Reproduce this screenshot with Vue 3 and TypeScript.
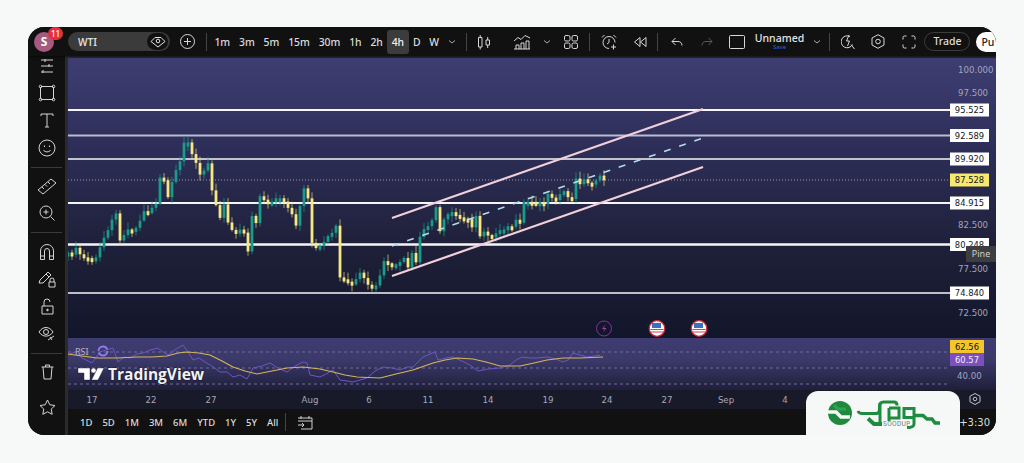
<script setup lang="ts">
import { computed } from 'vue'

type P = [number, number]

const intervals = ['1m', '3m', '5m', '15m', '30m', '1h', '2h', '4h', 'D', 'W']
const ranges = ['1D', '5D', '1M', '3M', '6M', 'YTD', '1Y', '5Y', 'All']

const closes: P[] = [
  [68, 255], [76, 250], [84, 258], [96, 259], [103, 240], [112, 218], [116, 215], [120, 238], [127, 230], [137, 228],
  [143, 212], [148, 212], [156, 203], [160, 178], [164, 182], [168, 198], [172, 182], [180, 163], [184, 143], [188, 140],
  [192, 153], [200, 175], [204, 172], [208, 163], [212, 188], [220, 218], [224, 203], [228, 222], [237, 235], [243, 227],
  [248, 250], [252, 217], [256, 223], [260, 198], [270, 207], [277, 195], [290, 208], [296, 227], [300, 207], [304, 190],
  [308, 200], [312, 245], [320, 248], [325, 243], [330, 235], [336, 227], [340, 278], [353, 285], [360, 275], [373, 290],
  [380, 277], [385, 260], [395, 267], [404, 260], [408, 268], [412, 253], [416, 263], [420, 237], [424, 227], [432, 222],
  [436, 207], [440, 230], [445, 215], [452, 210], [458, 220], [467, 218], [471, 227], [476, 218], [480, 238], [485, 230],
  [492, 237], [502, 227], [510, 228], [518, 220], [520, 225], [524, 202], [533, 202], [543, 203], [548, 195], [557, 198],
  [565, 193], [572, 200], [576, 180], [580, 182], [585, 180], [590, 185], [598, 177], [604, 180],
]

function closeAt(x: number): number {
  for (let i = 1; i < closes.length; i++) {
    const [x0, y0] = closes[i - 1]
    const [x1, y1] = closes[i]
    if (x <= x1) return y0 + ((y1 - y0) * (x - x0)) / (x1 - x0)
  }
  return closes[closes.length - 1][1]
}

function noise(i: number): number {
  const v = Math.sin(i * 12.9898) * 43758.5453
  return v - Math.floor(v)
}

const candles = computed(() => {
  const out: { x: number; top: number; h: number; wt: number; wb: number; up: boolean }[] = []
  let prev = closeAt(68)
  for (let x = 68, i = 0; x <= 604; x += 4, i++) {
    const c = closeAt(x) + (noise(i) - 0.5) * 5
    const top = Math.min(prev, c)
    const h = Math.max(Math.abs(prev - c), 4)
    out.push({ x, top, h, wt: top - 1 - noise(i + 300) * 6, wb: top + h + 1 + noise(i + 600) * 5, up: c < prev })
    prev = c
  }
  return out
})

const levels = [
  { y: 110, label: '95.525', w: 2, c: '#f6f6fa' },
  { y: 135.5, label: '92.589', w: 2, c: '#bcbccf' },
  { y: 159, label: '89.920', w: 1.5, c: '#f6f6fa' },
  { y: 203, label: '84.915', w: 2, c: '#f6f6fa' },
  { y: 244.5, label: '80.248', w: 2.4, c: '#f6f6fa' },
  { y: 293, label: '74.840', w: 1.5, c: '#f6f6fa' },
]

const ticks = [
  { y: 70, t: '100.000' }, { y: 93, t: '97.500' }, { y: 225, t: '82.500' },
  { y: 269, t: '77.500' }, { y: 313, t: '72.500' },
]

const dates = [
  { x: 92, t: '17' }, { x: 151, t: '22' }, { x: 211, t: '27' }, { x: 310, t: 'Aug' }, { x: 369, t: '6' },
  { x: 428, t: '11' }, { x: 488, t: '14' }, { x: 548, t: '19' }, { x: 607, t: '24' }, { x: 667, t: '27' },
  { x: 726, t: 'Sep' }, { x: 785, t: '4' },
]

const rsiPurple = '68,355 75,352 82,358 92,363 100,352 106,350 113,348 118,362 124,357 130,358 137,354 143,353 150,350 158,348 163,352 168,355 176,349 183,345 188,352 193,360 199,358 205,362 212,366 220,372 227,372 233,377 240,375 247,379 253,368 262,366 270,363 278,368 287,372 295,366 303,362 307,363 310,375 320,377 326,374 333,370 340,380 347,381 353,382 360,380 367,378 375,371 383,367 392,368 400,370 407,367 413,367 423,357 430,354 435,352 438,360 446,358 453,357 462,361 470,365 478,371 488,369 500,368 510,365 516,360 522,357 530,358 537,358 547,357 556,359 563,362 568,360 573,353 580,355 587,357 594,356 600,355'
const rsiYellow = '68,354 82,356 97,358 117,358 137,357 152,357 167,356 178,353 187,352 199,353 210,355 222,361 233,367 245,371 257,374 272,371 287,368 303,367 320,369 333,372 345,375 357,377 380,378 396,374 413,370 433,363 445,360 457,358 473,359 486,362 500,366 520,366 534,363 547,360 563,358 580,358 603,357'
</script>

<template>
  <div class="page">
    <div class="frame">
      <header class="topbar">
        <div class="avatar">S<span class="badge">11</span></div>
        <div class="symbol">
          <span class="symbol-name">WTI</span>
          <span class="symbol-eye">
            <svg width="16" height="12" viewBox="0 0 16 12" fill="none" stroke="#e4e4e4" stroke-width="1"><path d="M1 5.500 5 1.500h6l4 4-7 5.500z" /><circle cx="8" cy="5" r="1.800" /></svg>
          </span>
        </div>
        <svg class="ic ml10" width="15" height="15" viewBox="0 0 15 15" fill="none" stroke="#d8d8d8"><circle cx="7.500" cy="7.500" r="7" /><path d="M7.500 4v7M4 7.500h7" /></svg>
        <span class="sep ml11"></span>
        <div class="intervals">
          <span v-for="i in intervals" :key="i" class="interval" :class="{ active: i === '4h' }">{{ i }}</span>
        </div>
        <svg class="ic ml4" width="10" height="6" viewBox="0 0 10 6" fill="none" stroke="#aaa"><path d="m2 1.500 3 2.500 3-2.500" /></svg>
        <span class="sep ml9"></span>
        <svg class="ic ml10" width="14" height="16" viewBox="0 0 14 16" fill="none" stroke="#d8d8d8"><path d="M1.500 3.500h3.500v9.500h-3.500zM3.200 1v2.500M3.200 13v2.500M9 6h3.500v5h-3.500zM10.700 3v3M10.700 11v3" /></svg>
        <svg class="ic ml22" width="18" height="17" viewBox="0 0 18 17" fill="none" stroke="#d8d8d8"><path d="M1 8 5 4.500l3 2 4-4 5 2.500M1 16h16M3 16v-4h3v4M8 16v-6h3v6M13 16v-8h3v8" /></svg>
        <svg class="ic ml12" width="8" height="6" viewBox="0 0 8 6" fill="none" stroke="#aaa"><path d="m1 1.500 3 2.500 3-2.500" /></svg>
        <svg class="ic ml13" width="14" height="14" viewBox="0 0 14 14" fill="none" stroke="#d8d8d8"><rect x=".5" y=".5" width="5.500" height="5.500" rx="1.500" /><rect x="8" y=".5" width="5.500" height="5.500" rx="1.500" /><rect x=".5" y="8" width="5.500" height="5.500" rx="1.500" /><rect x="8" y="8" width="5.500" height="5.500" rx="1.500" /></svg>
        <span class="sep ml11"></span>
        <svg class="ic ml11" width="16" height="16" viewBox="0 0 16 16" fill="none" stroke="#d8d8d8"><path d="M8 14.500a6 6 0 1 1 6-6M8 5v3.500l-2 1.500M1 3.500 3.500 1M15 3.500 12.500 1M12.500 10.500v5M10 13h5" /></svg>
        <svg class="ic ml16" width="14" height="12" viewBox="0 0 14 12" fill="none" stroke="#d8d8d8"><path d="M7 1.500 1.500 6 7 10.500zM13 1.500 7.500 6l5.500 4.500z" /></svg>
        <span class="sep ml10"></span>
        <svg class="ic ml13" width="12" height="10" viewBox="0 0 12 10" fill="none" stroke="#d8d8d8"><path d="M4.500 1 1 4.500 4.500 8M1 4.500h6c2.500 0 4 1.500 4 4" /></svg>
        <svg class="ic ml18" width="12" height="10" viewBox="0 0 12 10" fill="none" stroke="#5a5a5a"><path d="M7.500 1 11 4.500 7.500 8M11 4.500H5c-2.500 0-4 1.500-4 4" /></svg>
        <svg class="ic ml16" width="16" height="14" viewBox="0 0 16 14" fill="none" stroke="#d8d8d8"><rect x=".5" y=".5" width="15" height="13" rx="1" /></svg>
        <div class="layout ml10">
          <span class="layout-name">Unnamed</span>
          <span class="layout-save">Save</span>
        </div>
        <svg class="ic ml10" width="8" height="6" viewBox="0 0 8 6" fill="none" stroke="#aaa"><path d="m1 1.500 3 2.500 3-2.500" /></svg>
        <span class="sep ml8"></span>
        <svg class="ic ml11" width="14" height="16" viewBox="0 0 14 16" fill="none" stroke="#d8d8d8"><path d="M9 2.500a6 6 0 1 0 2.500 8M10 10.500l3.500 4.500M8 1 5.500 7h3L6.500 12" /></svg>
        <svg class="ic ml16" width="14" height="15" viewBox="0 0 14 15" fill="none" stroke="#d8d8d8"><path d="M7 .7 13 4v7l-6 3.300L1 11V4z" /><circle cx="7" cy="7.500" r="2.300" /></svg>
        <svg class="ic ml17" width="14" height="14" viewBox="0 0 14 14" fill="none" stroke="#d8d8d8"><path d="M1 4.500V2.500A1.500 1.500 0 0 1 2.500 1h2M9.500 1h2A1.500 1.500 0 0 1 13 2.500v2M13 9.500v2a1.500 1.500 0 0 1-1.500 1.500h-2M4.500 13h-2A1.500 1.500 0 0 1 1 11.500v-2" /></svg>
        <span class="trade">Trade</span>
        <span class="publish">Pu</span>
      </header>

      <div class="body">
        <aside class="tools">
          <div class="tool"><svg width="18" height="18" viewBox="0 0 18 18" fill="none" stroke="#d4d4d4"><path d="M3 3h12M3 9h12M3 15h12M7 2v3M11 7v3M5 13v3" /></svg></div>
          <div class="tool"><svg width="18" height="18" viewBox="0 0 18 18" fill="none" stroke="#d4d4d4"><path d="M3 2.500h12M3 15.500h12M2.500 3v12M15.500 3v12" /><circle cx="2.500" cy="2.500" r="1.300" /><circle cx="15.500" cy="2.500" r="1.300" /><circle cx="2.500" cy="15.500" r="1.300" /><circle cx="15.500" cy="15.500" r="1.300" /></svg></div>
          <div class="tool"><svg width="14" height="15" viewBox="0 0 14 15" fill="none" stroke="#d4d4d4"><path d="M1 3V1h12v2M7 1v13M5 14h4" /></svg></div>
          <div class="tool"><svg width="18" height="18" viewBox="0 0 18 18" fill="none" stroke="#d4d4d4"><circle cx="9" cy="9" r="8" /><path d="M5.500 11c1 2.500 6 2.500 7 0M6.500 6.500v1.500M11.500 6.500v1.500" /></svg></div>
          <div class="tool-sep"></div>
          <div class="tool"><svg width="20" height="18" viewBox="0 0 20 18" fill="none" stroke="#d4d4d4"><path d="m1 13 13-11 5 4-13 11zM5 10l2 2M8 7.500l2 2M11 5l2 2" /></svg></div>
          <div class="tool"><svg width="16" height="17" viewBox="0 0 16 17" fill="none" stroke="#d4d4d4"><circle cx="7" cy="7" r="6" /><path d="m11.500 11.500 4 4M7 4.500v5M4.500 7h5" /></svg></div>
          <div class="tool-sep"></div>
          <div class="tool"><svg width="14" height="16" viewBox="0 0 14 16" fill="none" stroke="#d4d4d4"><path d="M.5 15.500V7a6.500 6.500 0 0 1 13 0v8.500h-4V7a2.500 2.500 0 0 0-5 0v8.500zM.5 12h4M9.500 12h4" /></svg></div>
          <div class="tool"><svg width="18" height="18" viewBox="0 0 18 18" fill="none" stroke="#d4d4d4"><path d="m1 13 1-3 8-8 3 3-8 8zM8 4l3 3M11 17v-5h6v5zM12 12v-2a2 2 0 0 1 4 0v2" /></svg></div>
          <div class="tool"><svg width="13" height="17" viewBox="0 0 13 17" fill="none" stroke="#d4d4d4"><path d="M1 8h11v8H1zM3 8V4a3 3 0 0 1 6 0" /><circle cx="6.500" cy="12" r=".8" fill="#d4d4d4" /></svg></div>
          <div class="tool"><svg width="18" height="16" viewBox="0 0 18 16" fill="none" stroke="#d4d4d4"><path d="M1 6c3.500-6 10.500-6 14 0-3.500 5.500-10.500 5.500-14 0z" /><circle cx="8" cy="6" r="2.500" /><path d="m10 14 6-4M12 11l2 3" /></svg></div>
          <div class="tool-sep"></div>
          <div class="tool"><svg width="13" height="16" viewBox="0 0 13 16" fill="none" stroke="#d4d4d4"><path d="M.5 3h12M2 3l1 12h7l1-12M4.500 3V1h4v2" /></svg></div>
          <div class="tool tool-last"><svg width="17" height="16" viewBox="0 0 17 16" fill="none" stroke="#d4d4d4"><path d="m8.500 1 2.300 4.800 5.200.7-3.800 3.600 1 5.200-4.700-2.500-4.700 2.500 1-5.200L1 6.500l5.200-.7z" /></svg></div>
        </aside>

        <main class="chart">
          <div class="pane-main">
            <svg class="pane-svg" viewBox="68 58 928 280" width="928" height="280">
              <line x1="68" x2="950" y1="180" y2="180" stroke="#9a9aa8" stroke-width="1" stroke-dasharray="1 2" />
              <line v-for="l in levels" :key="l.y" x1="68" x2="950" :y1="l.y" :y2="l.y" :stroke="l.c" :stroke-width="l.w" />
              <g v-for="c in candles" :key="c.x">
                <line :x1="c.x" :x2="c.x" :y1="c.wt" :y2="c.wb" :stroke="c.up ? '#1f9c8c' : '#e8d97a'" stroke-width=".7" />
                <rect :x="c.x - 1.400" :y="c.top" width="2.800" :height="c.h" :fill="c.up ? '#1a9a88' : '#f6e784'" />
              </g>
              <line x1="392" y1="218" x2="703" y2="109" stroke="#f3d0d9" stroke-width="2.200" />
              <line x1="392" y1="276" x2="703" y2="167" stroke="#f3d0d9" stroke-width="2.200" />
              <line x1="392" y1="246" x2="703" y2="138" stroke="#b4def0" stroke-width="1.500" stroke-dasharray="7 9" />
              <text v-for="t in ticks" :key="t.y" class="tick" x="958" :y="t.y + 3">{{ t.t }}</text>
              <g v-for="l in levels" :key="l.label">
                <rect x="950" :y="l.y - 6.500" width="39" height="13" fill="#fff" />
                <text class="tag" x="969.500" :y="l.y + 3.200" text-anchor="middle">{{ l.label }}</text>
              </g>
              <rect x="950" y="173.500" width="39" height="13" fill="#f7e96b" />
              <text class="tag" x="969.500" y="183.200" text-anchor="middle">87.528</text>
              <circle cx="604" cy="328.500" r="7.500" fill="none" stroke="#8a2f9c" stroke-width="1" />
              <path d="M605.500 324.500 602 329h2.500l-1.500 3.500 3.500-4.500H604z" fill="#9a3fb0" />
              <g v-for="fx in [657, 699]" :key="fx">
                <circle :cx="fx" cy="328.500" r="7.800" fill="#fff" stroke="#d02a38" stroke-width="1.300" />
                <path :d="`M${fx - 6} 332h12M${fx - 6.500} 329.500h13`" stroke="#d8404c" stroke-width="1.200" />
                <path :d="`M${fx - 5} 323h9v5h-9z`" fill="#3b6fc4" />
              </g>
            </svg>
            <span class="pine">Pine</span>
          </div>
          <div class="pane-rsi">
            <svg class="pane-svg" viewBox="68 338 928 52" width="928" height="52">
              <g stroke="#6f6e96" stroke-width="1" stroke-dasharray="3 3">
                <line x1="68" x2="948" y1="352" y2="352" />
                <line x1="68" x2="948" y1="368" y2="368" />
                <line x1="68" x2="948" y1="384" y2="384" />
              </g>
              <polyline :points="rsiPurple" fill="none" stroke="#6d55c4" stroke-width="1" />
              <polyline :points="rsiYellow" fill="none" stroke="#d8b45c" stroke-width="1.100" />
              <text class="rsi-label" x="75" y="354.500">RSI</text>
              <circle cx="103" cy="351" r="4.500" fill="none" stroke="#8d7bf0" stroke-width="2" stroke-dasharray="12 2" />
              <path class="tv-logo" d="M78 368h12v12h-6v-7h-6zM97.500 368h6.500l-6 12h-6.500z" />
              <circle class="tv-logo" cx="93.500" cy="370.500" r="2.500" />
              <text class="tv-name" x="108" y="380">TradingView</text>
              <rect x="950" y="340" width="34" height="13" fill="#f5c52c" />
              <text class="tag" x="967" y="349.800" text-anchor="middle">62.56</text>
              <rect x="950" y="353" width="34" height="13" fill="#7d4fc0" />
              <text class="tag tag-light" x="967" y="362.800" text-anchor="middle">60.57</text>
              <text class="tick" x="957" y="379">40.00</text>
            </svg>
          </div>
          <div class="time-axis">
            <svg class="pane-svg" viewBox="68 390 928 20" width="928" height="20">
              <text v-for="d in dates" :key="d.t + d.x" class="date" :x="d.x" y="402.500" text-anchor="middle">{{ d.t }}</text>
              <path d="M975 393.500 980 396.200v5.600L975 404.500 970 401.800v-5.600z" fill="none" stroke="#c4c4c4" />
              <circle cx="975" cy="399" r="1.800" fill="none" stroke="#c4c4c4" />
            </svg>
          </div>
          <footer class="bottombar">
            <span v-for="r in ranges" :key="r" class="range">{{ r }}</span>
            <span class="sep bsep"></span>
            <svg class="ic cal" width="16" height="15" viewBox="0 0 16 15" fill="none" stroke="#d0d0d0"><path d="M1 3h14v11H4M1 6h14M4 1v3M12 1v3M1 10h6M5 8l2 2-2 2" /></svg>
            <span class="utc">UTC+3:30</span>
          </footer>
        </main>
      </div>

      <div class="brand">
        <svg width="154" height="44" viewBox="0 0 154 44" fill="none">
          <circle cx="34" cy="22" r="12" fill="#1f8a3e" />
          <path d="M22 21h8l5 5h9" stroke="#f6f8f8" stroke-width="3.500" />
          <path d="M28 14l4 4h8" stroke="#2ea44f" stroke-width="3" />
          <g stroke="#1e8c3f" stroke-width="3">
            <path d="M52 20q1 2.500 4 2.500h14q3.500 0 3.500-4v-3q0-4.500 4-4.500H88q3 0 3 3.500" />
            <path d="M74 12v22" />
            <path d="M62 27.500 68 33h8" stroke-width="4" />
            <path d="M83 17v13M83 17h10v10H84" />
            <path d="M98 17.500h10v9H98zM108 24v9q0 3.500-7 3.500" />
            <path d="M109 24.500h8l4 3.500h5l3 4h5" stroke-width="3.400" />
          </g>
          <text class="brand-name" x="77" y="35">SOODUP</text>
        </svg>
      </div>
    </div>
  </div>
</template>

<style>
html, body { margin: 0; background: #f7f9f9; overflow: hidden; }
</style>

<style scoped>
.page {
  width: 1024px;
  height: 463px;
  padding: 27px 28px 0;
  box-sizing: border-box;
  background: #f7f9f9;
  overflow: hidden;
}
.frame {
  position: relative;
  width: 968px;
  height: 408px;
  border-radius: 16px;
  overflow: hidden;
  background: #2b2b2e;
  display: flex;
  flex-direction: column;
  font-family: "Noto Sans", sans-serif;
}
.topbar {
  height: 29px;
  flex: none;
  background: #111;
  display: flex;
  align-items: center;
  padding-left: 6px;
  color: #ddd;
  box-shadow: 0 1px 2px #0008;
  z-index: 1;
}
.ic { flex: none; }
.ml4 { margin-left: 4px; }
.ml8 { margin-left: 8px; }
.ml9 { margin-left: 9px; }
.ml10 { margin-left: 10px; }
.ml11 { margin-left: 11px; }
.ml12 { margin-left: 12px; }
.ml13 { margin-left: 13px; }
.ml16 { margin-left: 16px; }
.ml17 { margin-left: 17px; }
.ml18 { margin-left: 18px; }
.ml22 { margin-left: 22px; }
.sep {
  flex: none;
  width: 1px;
  height: 18px;
  background: #444;
}
.avatar {
  position: relative;
  flex: none;
  width: 20px;
  height: 20px;
  border-radius: 50%;
  background: #a65b7e;
  color: #fff;
  font-weight: 700;
  font-size: 12px;
  line-height: 20px;
  text-align: center;
}
.badge {
  position: absolute;
  top: -5px;
  right: -9px;
  width: 15px;
  height: 13px;
  border-radius: 7px;
  background: #e5303c;
  color: #fff;
  font-size: 8px;
  font-weight: 500;
  line-height: 13px;
}
.symbol {
  flex: none;
  margin-left: 14px;
  width: 102px;
  height: 19px;
  border-radius: 10px;
  background: #3b3b3b;
  display: flex;
  align-items: center;
  justify-content: space-between;
  padding: 0 2px 0 10px;
  box-sizing: border-box;
}
.symbol-name {
  font-size: 10px;
  font-weight: 600;
  color: #ddd;
}
.symbol-eye {
  width: 21px;
  height: 17px;
  border-radius: 9px;
  background: #111;
  display: flex;
  align-items: center;
  justify-content: center;
}
.intervals {
  display: flex;
  margin-left: 3px;
}
.interval {
  padding: 0 4.400px;
  height: 24px;
  line-height: 24px;
  font-size: 10.400px;
  font-weight: 500;
  border-radius: 3px;
  color: #dcdcdc;
}
.interval.active {
  background: #3c3c3c;
  color: #f2f2f2;
}
.layout {
  flex: none;
  width: 48px;
  display: flex;
  flex-direction: column;
  align-items: center;
  line-height: 1;
}
.layout-name {
  font-size: 10.500px;
  font-weight: 500;
  color: #e4e4e4;
}
.layout-save {
  font-size: 6px;
  color: #2a62d8;
  margin-top: 1px;
}
.trade {
  flex: none;
  margin-left: 8px;
  width: 46px;
  height: 19px;
  border: 1px solid #3c3c3c;
  border-radius: 10px;
  box-sizing: border-box;
  text-align: center;
  font-size: 10.500px;
  line-height: 17px;
  font-weight: 500;
  color: #ddd;
}
.publish {
  flex: none;
  margin-left: 6px;
  width: 24px;
  height: 20px;
  border-radius: 10px 0 0 10px;
  background: #fff;
  color: #222;
  font-size: 10.500px;
  font-weight: 500;
  line-height: 20px;
  padding-left: 5px;
  box-sizing: border-box;
}
.body {
  flex: 1;
  min-height: 0;
  display: flex;
  gap: 3px;
}
.tools {
  flex: none;
  width: 37px;
  background: #111;
  overflow: hidden;
  display: flex;
  flex-direction: column;
  align-items: stretch;
}
.tool {
  flex: none;
  height: 27.500px;
  display: flex;
  align-items: center;
  justify-content: center;
  padding-left: 1px;
  box-sizing: border-box;
}
.tool:first-child { margin-top: -4px; }
.tool-last { margin-top: 7.500px; }
.tool-sep {
  flex: none;
  height: 1px;
  margin: 4.750px 3px;
  background: #3a3a3a;
}
.chart {
  flex: 1;
  min-width: 0;
  display: flex;
  flex-direction: column;
  padding-top: 2px;
}
.pane-main {
  position: relative;
  height: 280px;
  flex: none;
  background: linear-gradient(180deg, #3e3e73 0%, #2e2f5a 30%, #1e2039 68%, #12162a 100%);
}
.pane-rsi {
  position: relative;
  height: 52px;
  flex: none;
  background: linear-gradient(180deg, #3e3c70 0%, #3c3a6b 40%, #1f1f3b 100%);
}
.time-axis {
  position: relative;
  height: 19px;
  flex: none;
  background: #181a2a;
}
.pane-svg {
  position: absolute;
  inset: 0;
  display: block;
}
.tick {
  font-family: "DejaVu Sans", sans-serif;
  font-size: 8.600px;
  fill: #a3a5bd;
}
.tag {
  font-family: "DejaVu Sans", sans-serif;
  font-size: 8.400px;
  fill: #15151a;
}
.tag-light { fill: #f2f2f2; }
.date {
  font-family: "DejaVu Sans", sans-serif;
  font-size: 8.600px;
  fill: #a6a8b6;
}
.pine {
  position: absolute;
  right: 0;
  top: 188px;
  width: 30px;
  height: 16px;
  background: #3e3e40;
  color: #cfcfcf;
  font-size: 9px;
  line-height: 16px;
  text-align: center;
}
.rsi-label {
  font-family: "Noto Sans", sans-serif;
  font-size: 9px;
  fill: #b4b4c4;
}
.tv-logo {
  fill: #fff;
  stroke: #1a1a2a;
  stroke-width: .4;
}
.tv-name {
  font-family: "Open Sans", sans-serif;
  font-size: 15.500px;
  font-weight: 700;
  fill: #f2f2f2;
  paint-order: stroke;
  stroke: #14142a;
  stroke-width: 1px;
}
.bottombar {
  flex: 1;
  min-height: 0;
  background: #111;
  display: flex;
  align-items: center;
  padding-left: 12px;
  color: #ddd;
}
.range {
  font-size: 9.500px;
  font-weight: 500;
  margin-right: 10px;
  color: #dcdcdc;
}
.bsep { margin-left: -3.500px; }
.cal { margin-left: 11px; }
.utc {
  margin-left: auto;
  padding-right: 6px;
  font-family: "DejaVu Sans", sans-serif;
  font-size: 10px;
  color: #ddd;
}
.brand {
  position: absolute;
  left: 778px;
  bottom: 0;
  z-index: 2;
  width: 154px;
  height: 44px;
  background: #f6f8f8;
  border-radius: 12px 12px 0 0;
}
.brand-name {
  font-family: "Inter", sans-serif;
  font-size: 6px;
  font-weight: 500;
  letter-spacing: .3px;
  fill: #6c8d7a;
}
</style>
